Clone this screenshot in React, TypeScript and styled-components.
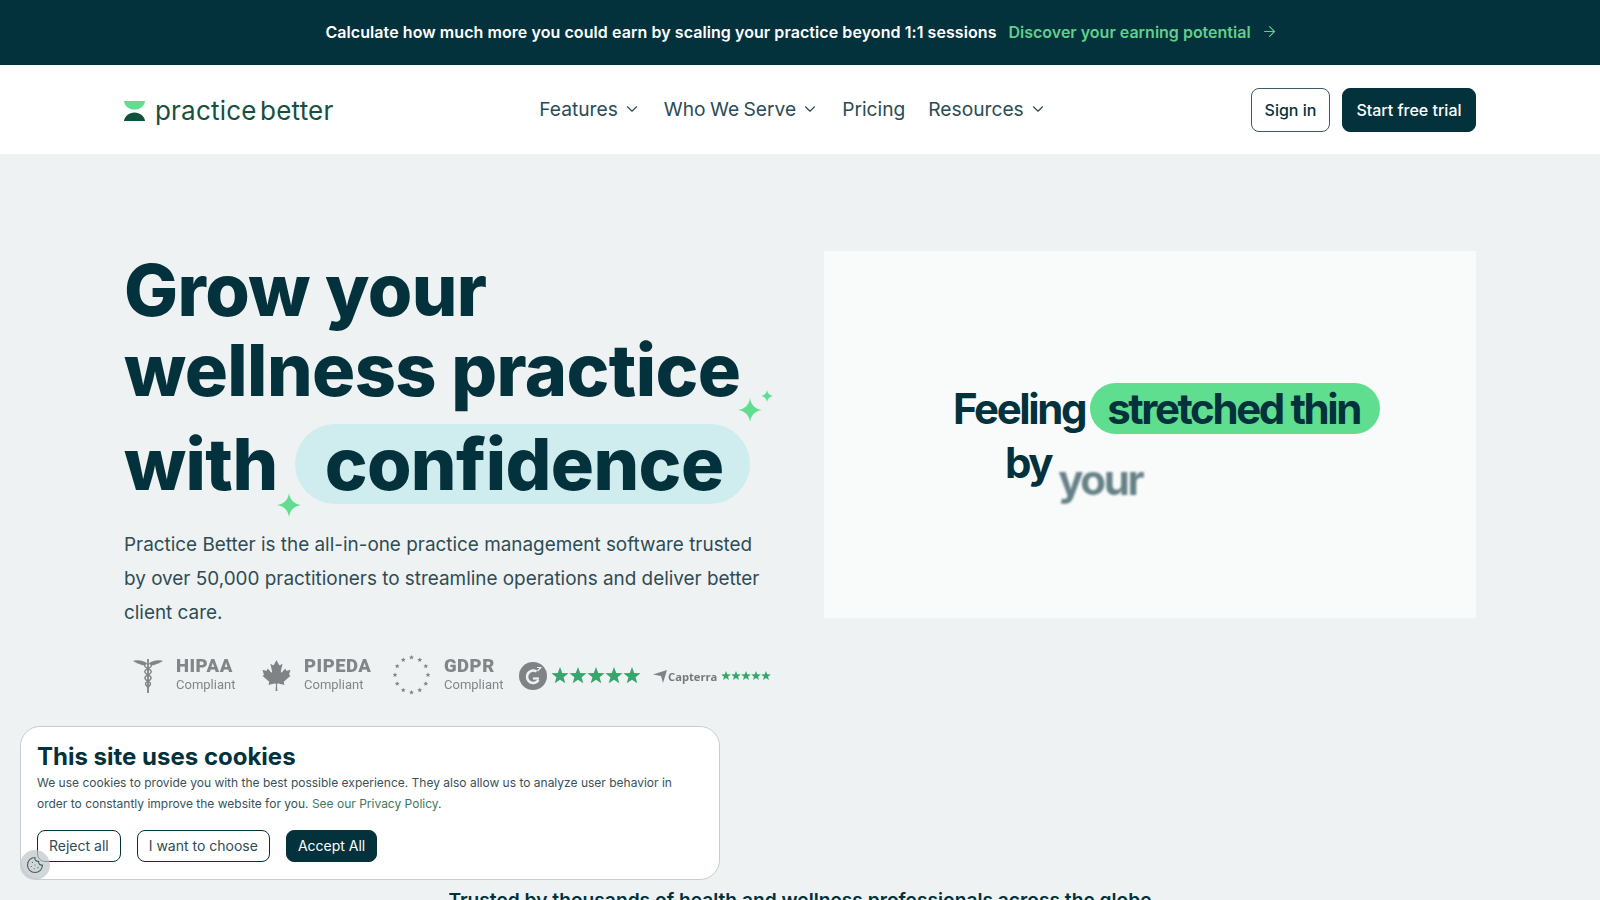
import React from 'react'
import styled, { createGlobalStyle } from 'styled-components'
import { ArrowRight, ChevronDown, Cookie } from 'lucide-react'
import { FaCanadianMapleLeaf } from 'react-icons/fa'

const GlobalStyle = createGlobalStyle`
  html, body {
    margin: 0;
    height: 900px;
    overflow: hidden;
    background: #EEF2F3;
    font-family: Inter, "Liberation Sans", sans-serif;
    color: #04323C;
  }
  * { box-sizing: border-box; }
`
const Banner = styled.div`
  height: 65px;
  padding: 0 0 2px 3px;
  background: #04323C;
  display: flex;
  align-items: center;
  justify-content: center;
  gap: 12px;
  font-size: 16px;
  font-weight: 600;
`
const BannerText = styled.span`
  color: #FFFFFF;
  letter-spacing: 0.07px;
`
const BannerLink = styled.a`
  color: #5FCF8B;
  display: flex;
  align-items: center;
  gap: 10px;
`
const Nav = styled.nav`
  height: 89px;
  background: #FFFFFF;
  padding: 0 124px;
  display: grid;
  grid-template-columns: 1fr auto 1fr;
  align-items: center;
`
const Logo = styled.div`
  display: flex;
  align-items: center;
  gap: 10px;
`
const LogoMarkWrap = styled.span`
  display: flex;
  padding-top: 3px;
`
const LogoText = styled.span`
  font-size: 26px;
  font-weight: 400;
  letter-spacing: 0.2px;
  color: #17503F;
  word-spacing: -4px;
  padding-top: 1px;
`
const NavLinks = styled.div`
  display: flex;
  align-items: center;
  gap: 23px;
  margin-left: -14px;
  padding-bottom: 2px;
`
const NavLink = styled.a`
  display: flex;
  align-items: center;
  gap: 5px;
  font-size: 19.2px;
  word-spacing: -1px;
  color: #2A4C55;
`
const NavActions = styled.div`
  display: flex;
  justify-content: flex-end;
  gap: 12px;
`
const NavButton = styled.button<{ $primary?: boolean }>`
  height: 44px;
  padding: 0 ${p => (p.$primary ? '13.5px' : '12.5px')};
  border-radius: 8px;
  border: 1px solid ${p => (p.$primary ? '#04323C' : '#3B5A62')};
  background: ${p => (p.$primary ? '#04323C' : '#FFFFFF')};
  color: ${p => (p.$primary ? '#FFFFFF' : '#04323C')};
  font-family: inherit;
  font-size: 16px;
  font-weight: 500;
`
const Hero = styled.section`
  padding: 97px 124px 0;
  display: grid;
  grid-template-columns: 652px 652px;
  gap: 48px;
  align-items: start;
`
const HeroLeft = styled.div`
  display: flex;
  flex-direction: column;
`
const Headline = styled.h1`
  margin: -1px 0 0;
  font-size: 72px;
  line-height: 80px;
  font-weight: 760;
  letter-spacing: -0.6px;
  color: #04323C;
`
const HeadlineRow = styled.div`
  position: relative;
  display: flex;
  align-items: center;
  gap: 17px;
  margin-top: 14px;
  height: 80px;
`
const Pill = styled.span`
  height: 80px;
  width: 455px;
  padding: 0 30px;
  border-radius: 40px;
  background: #CFECEE;
  display: flex;
  align-items: center;
  line-height: 80px;
`
const Sparkle = styled.svg<{ $left: number; $top: number }>`
  position: absolute;
  left: ${p => p.$left}px;
  top: ${p => p.$top}px;
  fill: #5EDE8E;
`
const Lead = styled.p`
  margin: 24px 0 0;
  max-width: 640px;
  font-size: 18.9px;
  line-height: 34px;
  color: #2F4C54;
`
const Badges = styled.div`
  margin-top: 22px;
  margin-left: 9px;
  height: 46px;
  display: flex;
  align-items: center;
  filter: blur(0.35px);
`
const Badge = styled.div<{ $gap: number; $width: number; $drop?: number }>`
  display: flex;
  align-items: center;
  gap: ${p => p.$gap}px;
  width: ${p => p.$width}px;
  padding-top: ${p => p.$drop || 0}px;
  flex: none;
`
const BadgeText = styled.div`
  display: flex;
  flex-direction: column;
  font-family: Roboto, sans-serif;
  color: #838689;
`
const BadgeName = styled.span`
  font-size: 18.5px;
  line-height: 20px;
  font-weight: 900;
  letter-spacing: 0.5px;
`
const BadgeNote = styled.span`
  font-size: 13px;
  line-height: 18px;
`
const Capterra = styled.span`
  font-family: "Open Sans", sans-serif;
  font-size: 11.2px;
  font-weight: 700;
  color: #75797C;
  margin: 0 3px 0 0;
`
const Panel = styled.div`
  height: 367px;
  background: #F9FAFA;
  display: flex;
  flex-direction: column;
  justify-content: center;
  padding: 6px 0 0 129px;
  font-size: 42px;
  font-weight: 700;
  letter-spacing: -2.4px;
  color: #04323C;
`
const PanelLine = styled.div<{ $indent?: number }>`
  display: flex;
  align-items: center;
  gap: 5px;
  margin-left: ${p => p.$indent || 0}px;
`
const PanelPill = styled.span`
  height: 51px;
  padding: 0 20px 0 17px;
  border-radius: 26px;
  background: #5EDE8E;
  display: flex;
  align-items: center;
  line-height: 51px;
`
const BlurWord = styled.span`
  margin-left: 2px;
  transform: translateY(16px);
  filter: blur(1px);
  opacity: 0.6;
`
const ByWord = styled.span`
  line-height: 58px;
`
const Trusted = styled.h2`
  margin: 0;
  padding-top: 188px;
  text-align: center;
  font-size: 19.2px;
  line-height: 28px;
  font-weight: 600;
  color: #04323C;
`
const CookieBox = styled.div`
  position: fixed;
  left: 20px;
  bottom: 20px;
  width: 700px;
  height: 154px;
  padding: 15px 16px 16px;
  background: #FFFFFF;
  border: 1px solid #C6CCCF;
  border-radius: 20px;
`
const CookieTitle = styled.h3`
  margin: 0 0 1px;
  font-size: 24px;
  line-height: 29px;
  font-weight: 700;
  color: #04323C;
`
const CookieText = styled.p`
  margin: 0;
  font-size: 12px;
  line-height: 21px;
  color: #37525A;
`
const PolicyLink = styled.a`
  color: #3A7A5E;
`
const CookieActions = styled.div`
  margin-top: 16px;
  display: flex;
  gap: 16px;
`
const CookieButton = styled.button<{ $primary?: boolean }>`
  height: 32px;
  padding: 0 11px 1px;
  border-radius: 8px;
  border: 1px solid #04323C;
  background: ${p => (p.$primary ? '#04323C' : '#FFFFFF')};
  color: ${p => (p.$primary ? '#FFFFFF' : '#2F4C54')};
  font-family: inherit;
  font-size: 14px;
`
const CookieFab = styled.div`
  position: fixed;
  left: 20px;
  top: 850px;
  width: 30px;
  height: 30px;
  border-radius: 50%;
  background: rgba(190, 197, 200, 0.7);
  display: flex;
  align-items: center;
  justify-content: center;
  color: #4A5F66;
`

const starPoints = (cx: number, cy: number, r: number) => {
  const pts: string[] = []
  for (let i = 0; i < 10; i++) {
    const a = (Math.PI / 5) * i - Math.PI / 2
    const rad = i % 2 ? r * 0.42 : r
    pts.push(`${(cx + rad * Math.cos(a)).toFixed(2)},${(cy + rad * Math.sin(a)).toFixed(2)}`)
  }
  return pts.join(' ')
}

const StarRow = ({ size, step, color }: { size: number; step: number; color: string }) => (
  <svg width={step * 5} height={size * 2} viewBox={`0 0 ${step * 5} ${size * 2}`}>
    {[0, 1, 2, 3, 4].map(i => (
      <polygon key={i} points={starPoints(step * i + step / 2, size, size)} fill={color} />
    ))}
  </svg>
)

const Star4 = ({ size, left, top }: { size: number; left: number; top: number }) => (
  <Sparkle $left={left} $top={top} width={size} height={size} viewBox="0 0 24 24">
    <path d="M12 0C13 7 17 11 24 12C17 13 13 17 12 24C11 17 7 13 0 12C7 11 11 7 12 0Z" />
  </Sparkle>
)

const LogoMark = () => (
  <svg width="21" height="20" viewBox="0 0 21 20">
    <path d="M0 0H21C20.5 5 16 8.6 10.5 8.6C5 8.6 0.5 5 0 0Z" fill="#5EDE8E" />
    <path d="M0 20H21C20.5 15 16 11.4 10.5 11.4C5 11.4 0.5 15 0 20Z" fill="#0F5040" />
  </svg>
)

const Caduceus = () => (
  <svg width="30" height="37" viewBox="0 0 30 37" fill="none" stroke="#808386">
    <path d="M15 2V36" strokeWidth="1.8" />
    <path d="M0.5 4C5 3 10 3.5 14 6.5C13 8.5 9 8.5 7 7C5 6.5 3 5.5 0.5 4Z" fill="#808386" strokeWidth="0.4" />
    <path d="M29.5 4C25 3 20 3.5 16 6.5C17 8.5 21 8.5 23 7C25 6.5 27 5.5 29.5 4Z" fill="#808386" strokeWidth="0.4" />
    <path d="M12 7C9 11 20 12 18 15.5C16 19 11 18 12 21.5C13 25 18 24 17.5 27C17 29 15 29.5 15 31" strokeWidth="1.4" />
    <path d="M18 7C21 11 10 12 12 15.5C14 19 19 18 18 21.5C17 25 12 24 12.5 27C13 29 15 29.5 15 31" strokeWidth="1.4" />
  </svg>
)

const EuRing = () => (
  <svg width="37" height="40" viewBox="0 0 37 40">
    {Array.from({ length: 12 }).map((_, i) => {
      const a = (Math.PI / 6) * i
      return (
        <polygon
          key={i}
          points={starPoints(18.5 + 16.5 * Math.sin(a), 20 - 17.5 * Math.cos(a), 2.6)}
          fill="#808386"
        />
      )
    })}
  </svg>
)

const G2Mark = () => (
  <svg width="28" height="28" viewBox="0 0 28 28">
    <circle cx="14" cy="14" r="14" fill="#808386" />
    <path d="M17.5 9.5A6.2 6.2 0 1 0 19.5 18" fill="none" stroke="#EEF2F3" strokeWidth="2.6" />
    <path d="M14 16.5H20" stroke="#EEF2F3" strokeWidth="2.2" />
    <path d="M18 5.5H22.5M18.5 9L22 5.5" stroke="#EEF2F3" strokeWidth="1.2" fill="none" />
  </svg>
)

const CapterraMark = () => (
  <svg width="14" height="13" viewBox="0 0 14 13">
    <path d="M0 4.5L14 0L10 13L8 6Z" fill="#808386" />
  </svg>
)

const Chevron = () => <ChevronDown size={18} strokeWidth={1.5} />

export default function App() {
  return (
    <>
      <GlobalStyle />
      <Banner>
        <BannerText>Calculate how much more you could earn by scaling your practice beyond 1:1 sessions</BannerText>
        <BannerLink>
          Discover your earning potential
          <ArrowRight size={17} strokeWidth={1.5} />
        </BannerLink>
      </Banner>
      <Nav>
        <Logo>
          <LogoMarkWrap>
            <LogoMark />
          </LogoMarkWrap>
          <LogoText>practice better</LogoText>
        </Logo>
        <NavLinks>
          <NavLink>Features <Chevron /></NavLink>
          <NavLink>Who We Serve <Chevron /></NavLink>
          <NavLink>Pricing</NavLink>
          <NavLink>Resources <Chevron /></NavLink>
        </NavLinks>
        <NavActions>
          <NavButton>Sign in</NavButton>
          <NavButton $primary>Start free trial</NavButton>
        </NavActions>
      </Nav>
      <Hero>
        <HeroLeft>
          <Headline>
            Grow your
            <br />
            wellness practice
            <HeadlineRow>
              with
              <Pill>confidence</Pill>
              <Star4 size={24} left={614} top={-26} />
              <Star4 size={12} left={637} top={-34} />
              <Star4 size={24} left={153} top={69} />
            </HeadlineRow>
          </Headline>
          <Lead>
            Practice Better is the all-in-one practice management software trusted by over 50,000
            practitioners to streamline operations and deliver better client care.
          </Lead>
          <Badges>
            <Badge $gap={13} $width={128}>
              <Caduceus />
              <BadgeText>
                <BadgeName>HIPAA</BadgeName>
                <BadgeNote>Compliant</BadgeNote>
              </BadgeText>
            </Badge>
            <Badge $gap={12} $width={132}>
              <FaCanadianMapleLeaf size={31} color="#808386" />
              <BadgeText>
                <BadgeName>PIPEDA</BadgeName>
                <BadgeNote>Compliant</BadgeNote>
              </BadgeText>
            </Badge>
            <Badge $gap={14} $width={126}>
              <EuRing />
              <BadgeText>
                <BadgeName>GDPR</BadgeName>
                <BadgeNote>Compliant</BadgeNote>
              </BadgeText>
            </Badge>
            <Badge $gap={4} $width={134} $drop={2}>
              <G2Mark />
              <StarRow size={9} step={18} color="#36A66A" />
            </Badge>
            <Badge $gap={1} $width={120} $drop={2}>
              <CapterraMark />
              <Capterra>Capterra</Capterra>
              <StarRow size={5} step={10} color="#36A66A" />
            </Badge>
          </Badges>
        </HeroLeft>
        <Panel>
          <PanelLine>
            Feeling
            <PanelPill>stretched thin</PanelPill>
          </PanelLine>
          <PanelLine $indent={52}>
            <ByWord>by</ByWord>
            <BlurWord>your</BlurWord>
          </PanelLine>
        </Panel>
      </Hero>
      <Trusted>Trusted by thousands of health and wellness professionals across the globe</Trusted>
      <CookieBox>
        <CookieTitle>This site uses cookies</CookieTitle>
        <CookieText>
          We use cookies to provide you with the best possible experience. They also allow us to analyze user behavior in
          order to constantly improve the website for you. <PolicyLink>See our Privacy Policy</PolicyLink>.
        </CookieText>
        <CookieActions>
          <CookieButton>Reject all</CookieButton>
          <CookieButton>I want to choose</CookieButton>
          <CookieButton $primary>Accept All</CookieButton>
        </CookieActions>
      </CookieBox>
      <CookieFab>
        <Cookie size={18} strokeWidth={1.5} />
      </CookieFab>
    </>
  )
}
